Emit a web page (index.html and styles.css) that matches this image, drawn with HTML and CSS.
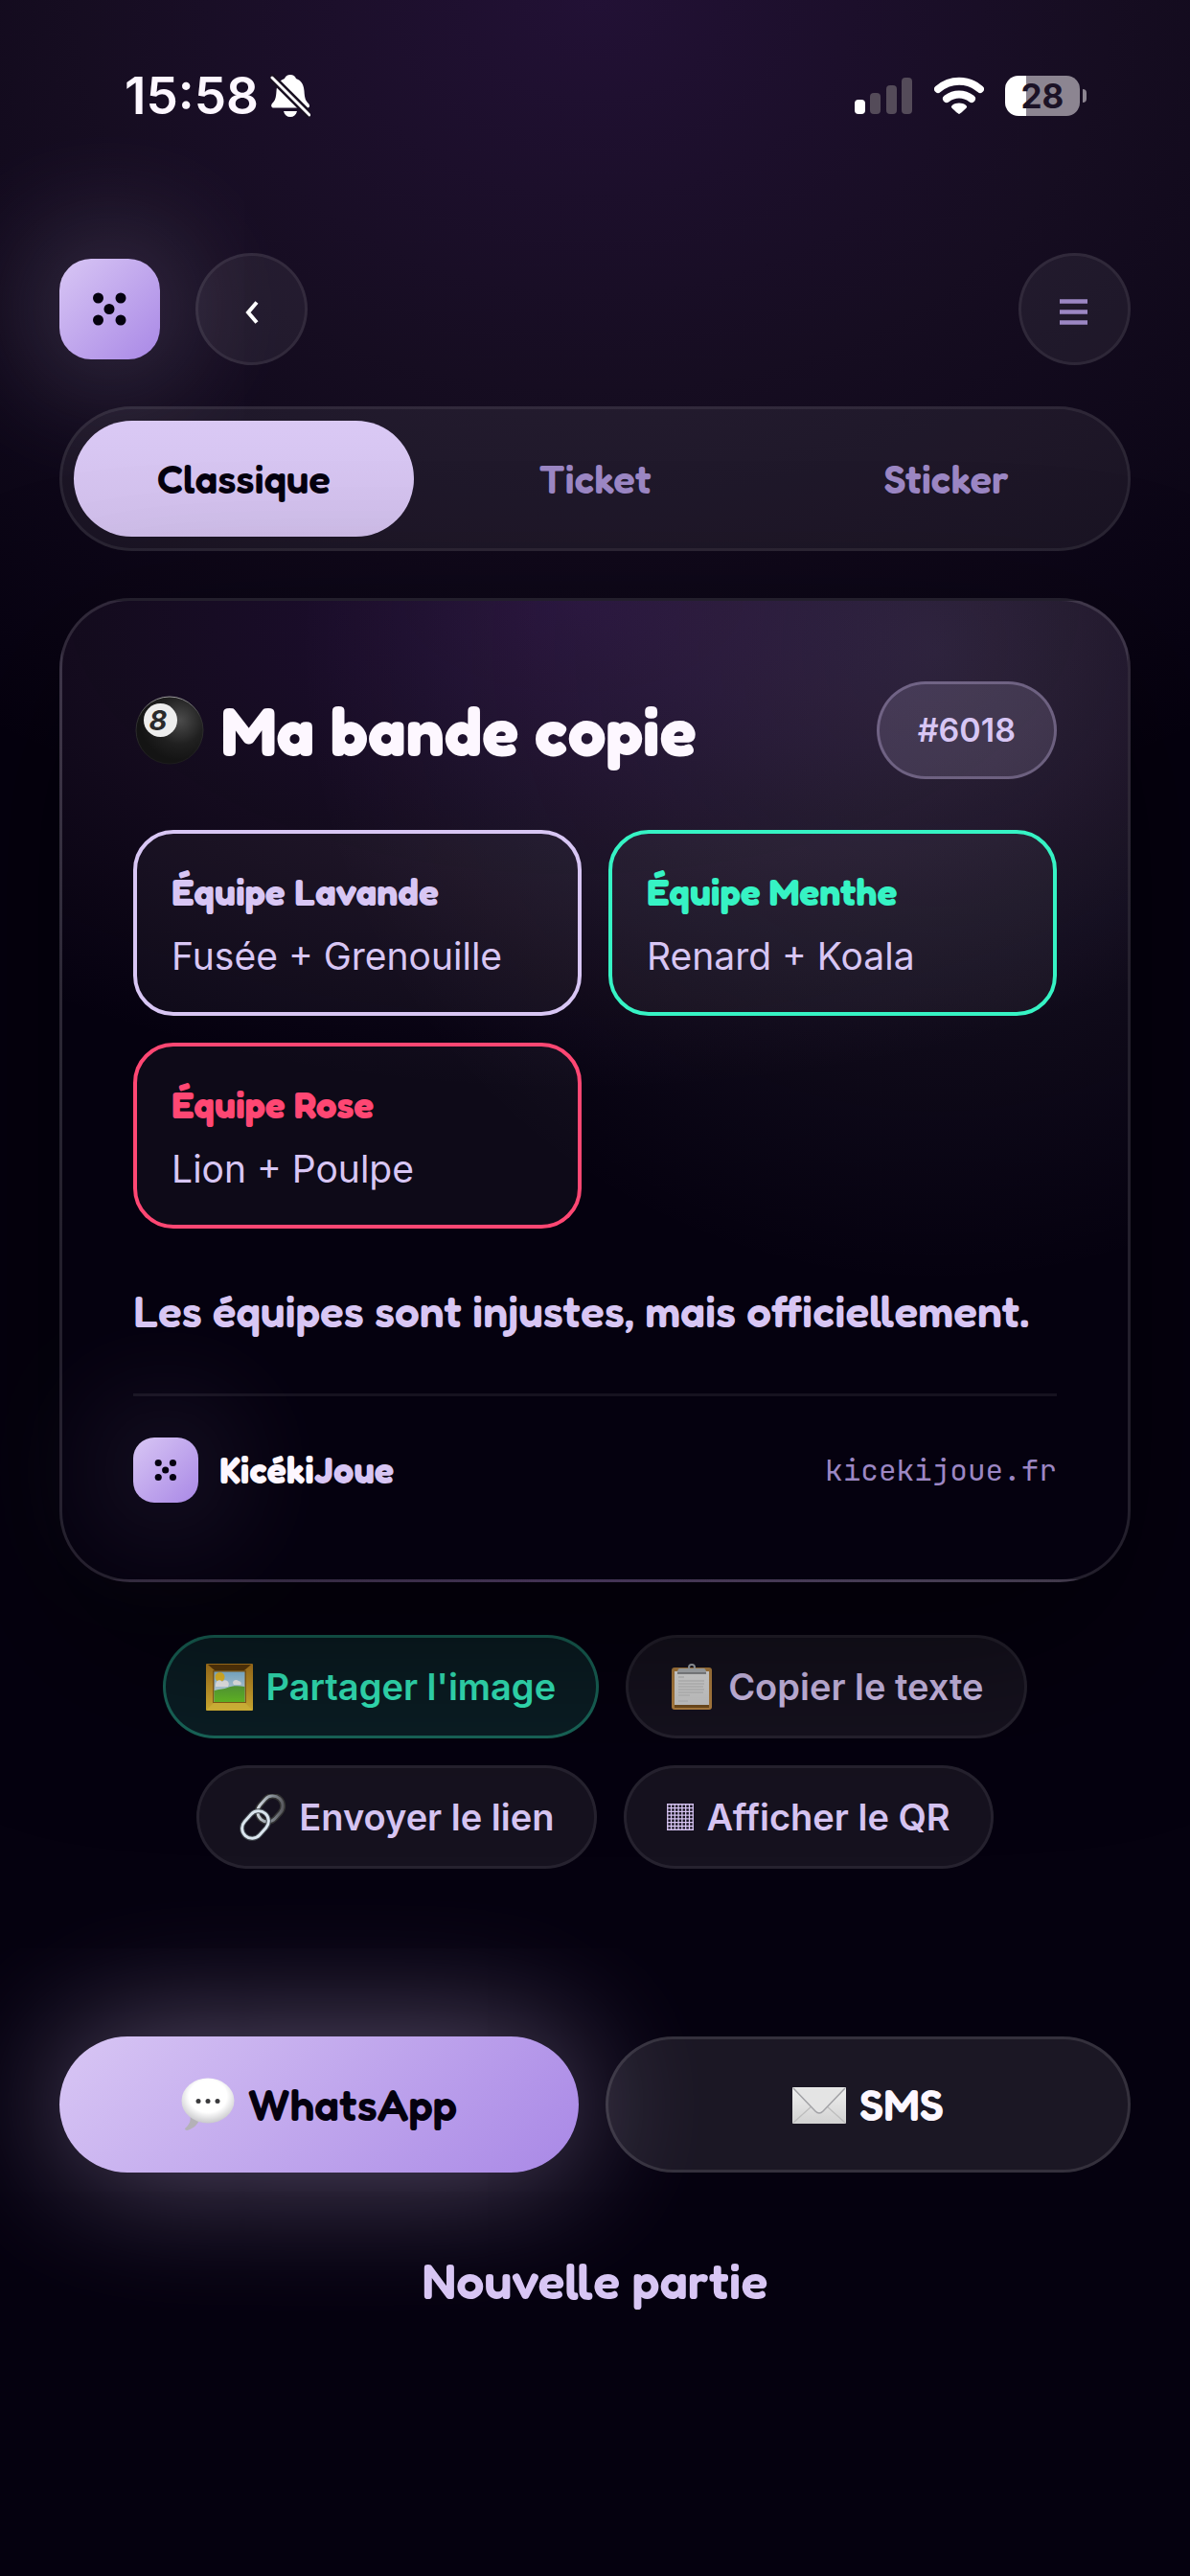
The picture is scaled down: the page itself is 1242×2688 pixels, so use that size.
FILE: index.html
```html
<!DOCTYPE html>
<html lang="fr">
<head>
<meta charset="utf-8">
<meta name="viewport" content="width=device-width, initial-scale=1">
<title>KicékiJoue – Ma bande copie</title>
<link rel="stylesheet" href="styles.css">
</head>
<body>
<svg class="defs" width="0" height="0" aria-hidden="true">
  <defs>
    <symbol id="dice" viewBox="0 0 105 105">
      <circle cx="40.500" cy="41" r="5.500"/><circle cx="64" cy="41" r="5.500"/>
      <circle cx="52" cy="52.500" r="5.500"/>
      <circle cx="40.500" cy="64" r="5.500"/><circle cx="64" cy="64" r="5.500"/>
    </symbol>
    <radialGradient id="ball" cx=".65" cy=".35" r=".6"><stop offset="0" stop-color="#4c4c4c"/><stop offset=".6" stop-color="#202020"/><stop offset="1" stop-color="#141414"/></radialGradient>
    <linearGradient id="ballRim" x1="0" y1="0" x2="0" y2="1"><stop offset="0" stop-color="#9a9a9a"/><stop offset=".3" stop-color="#333"/><stop offset="1" stop-color="#1c1c1c"/></linearGradient>
    <linearGradient id="gold" x1="0" y1="0" x2="0" y2="1"><stop offset="0" stop-color="#b9811f"/><stop offset="1" stop-color="#e2bd36"/></linearGradient>
    <linearGradient id="sky" x1="0" y1="0" x2="0" y2="1"><stop offset="0" stop-color="#8fc9ea"/><stop offset="1" stop-color="#f0f5f8"/></linearGradient>
    <linearGradient id="grass" x1="0" y1="0" x2="0" y2="1"><stop offset="0" stop-color="#5fae3c"/><stop offset="1" stop-color="#6ccb28"/></linearGradient>
    <linearGradient id="steel" x1="0" y1="0" x2="1" y2="1"><stop offset="0" stop-color="#eef4fa"/><stop offset=".5" stop-color="#8b949c"/><stop offset="1" stop-color="#4d4a4e"/></linearGradient>
    <linearGradient id="paper" x1="0" y1="0" x2="0" y2="1"><stop offset="0" stop-color="#efefef"/><stop offset="1" stop-color="#d2d2d2"/></linearGradient>
    <radialGradient id="bubble" cx=".5" cy=".4" r=".6"><stop offset=".6" stop-color="#fff"/><stop offset="1" stop-color="#c9c9cc"/></radialGradient>
  </defs>
</svg>

<div class="status">
  <div class="status-left">
    <span class="clock">15:58</span>
    <svg class="bell" viewBox="0 0 42 46" aria-label="Silencieux">
      <path fill="#fff" d="M21 1c3 0 5 1.500 6 4 6 2 8 7 8.500 13 .5 8 1.500 10 4.500 13 1.500 2 1.500 4.500-1 4.500H3.500C1 35.500.5 33 2 31c3.500-3.500 4-6 4.500-13C7 12 9 7 15 5c1-2.500 3-4 6-4zM14 39h14c-1 4-3.500 6-7 6s-6-2-7-6z"/>
      <path stroke="#191021" stroke-width="8" stroke-linecap="round" d="M2 4l39 39"/>
      <path stroke="#fff" stroke-width="3" stroke-linecap="round" d="M2 4l39 39"/>
    </svg>
  </div>
  <div class="status-right">
    <svg class="signal" viewBox="0 0 61 40" aria-label="Réseau">
      <rect x="0" y="24" width="11" height="15" rx="4" fill="#fff"/>
      <g fill="#544b59"><rect x="16" y="17" width="11" height="22" rx="4"/><rect x="33" y="9" width="11" height="30" rx="4"/><rect x="49" y="1" width="11" height="38" rx="4"/></g>
    </svg>
    <svg class="wifi" viewBox="0 0 52 40" aria-label="Wi-Fi">
      <g fill="none" stroke="#fff" stroke-width="8" stroke-linecap="round"><path d="M4 13C17 2 35 2 48 13"/><path d="M13 23c8-6 18-6 26 0"/></g>
      <path fill="#fff" d="M26 39c1 0 7-5.500 8-7 .8-1.500-2.500-4.500-8-4.500S17.200 30.500 18 32c1 1.500 7 7 8 7z"/>
    </svg>
    <div class="battery"><span class="level">28</span></div>
  </div>
</div>

<main class="page">
  <header class="topbar">
    <a class="logo" href="#" aria-label="Accueil"><svg><use href="#dice"/></svg></a>
    <button class="round" type="button" aria-label="Retour"><svg viewBox="0 0 16 24"><path d="M13 1.500L4 12l9 10.500" fill="none" stroke="#fff" stroke-width="4"/></svg></button>
    <button class="round menu" type="button" aria-label="Menu"><svg viewBox="0 0 30 28"><path d="M0 2.500h29M0 13.500h29M0 24.500h29" stroke="#9c87c4" stroke-width="4.500"/></svg></button>
  </header>

  <nav class="tabs" aria-label="Style">
    <button class="tab active" type="button">Classique</button>
    <button class="tab" type="button">Ticket</button>
    <button class="tab" type="button">Sticker</button>
  </nav>

  <article class="card">
    <div class="card-head">
      <svg class="ball" viewBox="0 0 72 72" aria-hidden="true">
        <circle cx="36" cy="36" r="35" fill="url(#ball)" stroke="url(#ballRim)" stroke-width="1"/>
        <circle cx="26.500" cy="25.500" r="17.500" fill="#ededed"/>
        <text x="24" y="36" text-anchor="middle" class="ball-number">8</text>
      </svg>
      <h1>Ma bande copie</h1>
      <span class="badge">#6018</span>
    </div>
    <div class="teams">
      <section class="team lavande"><h2>Équipe Lavande</h2><p>Fusée + Grenouille</p></section>
      <section class="team menthe"><h2>Équipe Menthe</h2><p>Renard + Koala</p></section>
      <section class="team rose"><h2>Équipe Rose</h2><p>Lion + Poulpe</p></section>
    </div>
    <p class="quote">Les équipes sont injustes, mais officiellement.</p>
    <footer class="card-foot">
      <span class="logo small"><svg><use href="#dice"/></svg></span>
      <span class="brand">Kicéki<span>Joue</span></span>
      <span class="url">kicekijoue.fr</span>
    </footer>
  </article>

  <div class="chips">
    <button class="chip share" type="button">
      <svg class="emoji" viewBox="0 0 49 49"><rect width="49" height="49" rx="1" fill="url(#gold)"/><path d="M2 1h45l-7 6H9z" fill="#5d3b0b"/><rect x="7" y="7" width="35" height="34" fill="#92651a"/><rect x="8.500" y="8.500" width="32" height="31.500" fill="url(#sky)"/><circle cx="14.500" cy="14" r="5" fill="#f4c72c"/><path d="M10 22c0-5 5-6 7-3 3-4 9 0 6 5H10zM28 20c0-3 4-4 6-2 2 0 4 3 2 4h-7z" fill="#fff"/><path d="M8.500 28c7-2 10-1 14-3s12-2 18-1v16h-32z" fill="url(#grass)"/><path d="M1 48l7-7h33l7 7z" fill="#e6c53d"/></svg>
      Partager l'image</button>
    <button class="chip" type="button">
      <svg class="emoji" viewBox="0 0 49 49"><rect x="3" y="4" width="42" height="44" rx="3" fill="#b78443"/><path d="M6 42h36v4H6z" fill="#77501f"/><rect x="6" y="8" width="36" height="35" fill="url(#paper)"/><circle cx="24" cy="4" r="3" fill="none" stroke="#a9afb5" stroke-width="2"/><path d="M12 5h24c2 0 3 1 3 5H9c0-4 1-5 3-5z" fill="#b9bdc1"/><path d="M9 10h30" stroke="#77787b" stroke-width="1.500"/><path d="M10 14h6M10 18h27M10 21h27M10 24h26M10 27h27M10 30h26M10 33h12M10 39h10" stroke="#c0c0c0" stroke-width="1.200"/></svg>
      Copier le texte</button>
    <button class="chip" type="button">
      <svg class="emoji" viewBox="0 0 49 49"><g fill="none"><rect x="17.500" y="5" width="29" height="21" rx="10.500" transform="rotate(-48 32 15.500)" stroke="#333" stroke-width="6"/><rect x="17.500" y="5" width="29" height="21" rx="10.500" transform="rotate(-48 32 15.500)" stroke="url(#steel)" stroke-width="3"/><rect x="1" y="21.500" width="31" height="21" rx="10.500" transform="rotate(-48 16.500 32)" stroke="#444a50" stroke-width="5"/><rect x="1" y="21.500" width="31" height="21" rx="10.500" transform="rotate(-48 16.500 32)" stroke="#dce7f0" stroke-width="3"/></g></svg>
      Envoyer le lien</button>
    <button class="chip" type="button">
      <svg class="grid" viewBox="0 0 28 28"><path d="M.75 0v28M4.530 0v28M8.320 0v28M12.100 0v28M15.900 0v28M19.700 0v28M23.500 0v28M27.250 0v28M0 .75h28M0 4.530h28M0 8.320h28M0 12.100h28M0 15.900h28M0 19.700h28M0 23.500h28M0 27.250h28" stroke="#d8c6f4" stroke-width="1.300"/></svg>
      Afficher le QR</button>
  </div>

  <div class="actions">
    <button class="action primary" type="button">
      <svg class="emoji" viewBox="0 0 56 56"><path d="M9 37c2 7 0 12-5 16 0 2 2 2.500 4 1.500C14 52 17 49 19 44z" fill="#b4b1b8"/><ellipse cx="28" cy="24" rx="27.500" ry="23.500" fill="url(#bubble)"/><g fill="#3a3a3c"><circle cx="18" cy="24.500" r="2.500"/><circle cx="28" cy="24.500" r="2.500"/><circle cx="38" cy="24.500" r="2.500"/></g></svg>
      WhatsApp</button>
    <button class="action secondary" type="button">
      <svg class="emoji" viewBox="0 0 56 56"><rect y="10" width="56" height="38" rx="1" fill="url(#paper)"/><path d="M1 47l20-18M55 47L35 29" stroke="#bdbdbd" stroke-width="1.200"/><path d="M1 11l23 24c2.500 2.500 5.500 2.500 8 0l23-24" fill="#e4e4e4" stroke="#a2a2a6" stroke-width="1.500"/></svg>
      SMS</button>
  </div>
  <a class="restart" href="#">Nouvelle partie</a>
</main>
</body>
</html>
```
FILE: styles.css
```css
:root {
  --base: #05010f;
  --lavender: #d8c6f4;
  --violet: #a988e6;
  --muted: #9c87c4;
  --ink: #fdf7ff;
  --mint: #36f3c4;
  --rose: #ff4773;
  --display: Fredoka, Lato, "Open Sans", sans-serif;
  --text: Inter, "Noto Sans", sans-serif;
}

* {
  box-sizing: border-box;
}

body {
  margin: 0;
  min-height: 100vh;
  overflow-x: hidden;
  background:
    radial-gradient(96% 900px at 50% 0, rgba(150, 80, 205, 0.2), rgba(160, 110, 180, 0.11) 45%, transparent) no-repeat,
    var(--base);
  color: var(--ink);
  font-family: var(--text);
}

h1,
h2,
p {
  margin: 0;
}

button {
  margin: 0;
  padding: 0;
  border: 0;
  background: none;
  color: inherit;
  font: inherit;
}

a {
  color: inherit;
  text-decoration: none;
}

svg {
  display: block;
  flex: none;
}

.defs {
  position: absolute;
}

/* Status bar */
.status {
  display: flex;
  justify-content: space-between;
  align-items: center;
  padding: 68px 108px 68px 130px;
  height: 200px;
}

.status-left,
.status-right {
  display: flex;
  align-items: center;
}

.status-left {
  gap: 12px;
}

.status-right {
  gap: 22px;
}

.clock {
  font-size: 53px;
  line-height: 64px;
  font-weight: 600;
}

.bell {
  width: 42px;
  height: 46px;
}

.signal {
  width: 61px;
  height: 40px;
}

.wifi {
  width: 52px;
  height: 40px;
}

.battery {
  display: flex;
  align-items: center;
  gap: 3px;
}

.battery::after {
  content: "";
  width: 4px;
  height: 14px;
  border-radius: 0 8px 8px 0;
  background: #8c8591;
}

.level {
  width: 78px;
  border-radius: 14px;
  background: linear-gradient(90deg, #fff 28%, #8c8591 28%);
  color: #1b1226;
  font-size: 35px;
  line-height: 42px;
  font-weight: 700;
  text-align: center;
}

/* Page */
.page {
  padding: 64px 5% 200px;
}

.topbar {
  display: flex;
  align-items: center;
  gap: 37px;
}

.logo {
  width: 105px;
  height: 105px;
  border-radius: 33px;
  background: linear-gradient(135deg, var(--lavender), var(--violet));
  box-shadow: 0 0 144px rgba(216, 198, 244, 0.45);
}

.logo svg {
  width: 100%;
  height: 100%;
  fill: var(--base);
}

.logo.small {
  width: 68px;
  height: 68px;
  border-radius: 22px;
}

.round {
  display: grid;
  place-items: center;
  width: 117px;
  height: 117px;
  padding-top: 6px;
  border: 3px solid rgba(255, 255, 255, 0.07);
  border-radius: 50%;
  background: rgba(255, 255, 255, 0.06);
}

.round svg {
  width: 16px;
  height: 24px;
}

.round.menu {
  margin-left: auto;
}

.menu svg {
  width: 30px;
  height: 28px;
}

.tabs {
  display: flex;
  gap: 12px;
  margin-top: 43px;
  padding: 12px;
  border: 3px solid rgba(255, 255, 255, 0.07);
  border-radius: 76px;
  background: rgba(255, 255, 255, 0.06);
}

.tab {
  flex: 1;
  height: 121px;
  border-radius: 61px;
  color: var(--muted);
  font: 600 42px/48px var(--display);
}

.tab.active {
  background: linear-gradient(#dac9f5, #d0beea);
  color: var(--base);
}

/* Shared result card */
.card {
  position: relative;
  z-index: 1;
  margin-top: 49px;
  padding: 84px 74px 80px;
  border: 3px solid rgba(255, 255, 255, 0.12);
  border-radius: 74px;
  background:
    radial-gradient(60% 65% at 82% 5%, rgba(216, 198, 244, 0.12), transparent),
    radial-gradient(85% 50% at 48% 0, rgba(145, 65, 205, 0.2), rgba(150, 100, 160, 0.1) 55%, transparent),
    var(--base);
  box-shadow: 0 72px 180px rgba(0, 0, 0, 0.5);
}

.card-head {
  display: flex;
  align-items: center;
}

.ball {
  width: 72px;
  height: 72px;
  margin: 0 18px 0 2px;
}

.ball-number {
  font: italic 700 29px var(--text);
  fill: #2a2a2a;
}

h1 {
  font: 700 71px/84px var(--display);
}

.badge {
  margin-left: auto;
  padding: 28px 40px;
  border: 3px solid rgba(216, 198, 244, 0.3);
  border-radius: 51px;
  background: rgba(216, 198, 244, 0.15);
  color: var(--lavender);
  font-size: 34px;
  line-height: 40px;
  font-weight: 600;
}

.teams {
  display: grid;
  grid-template-columns: 1fr 1fr;
  gap: 28px;
  margin-top: 53px;
}

.team {
  padding: 37px 36px 32px;
  border: 4px solid currentColor;
  border-radius: 42px;
  background: rgba(255, 255, 255, 0.04);
}

.team h2 {
  font: 700 39px/48px var(--display);
}

.team p {
  margin-top: 17px;
  color: var(--lavender);
  font-size: 39px;
  line-height: 52px;
}

.team.lavande {
  color: var(--lavender);
}

.team.menthe {
  color: var(--mint);
}

.team.rose {
  color: var(--rose);
}

.quote {
  margin-top: 58px;
  color: var(--lavender);
  font: 600 46px/56px var(--display);
}

.card-foot {
  display: flex;
  align-items: center;
  margin-top: 58px;
  padding-top: 43px;
  border-top: 3px solid rgba(255, 255, 255, 0.07);
}

.brand {
  margin-left: 22px;
  font: 700 38px/48px var(--display);
}

.brand span {
  color: var(--lavender);
}

.url {
  margin-left: auto;
  color: var(--muted);
  font: 31px/40px "JetBrains Mono", "DejaVu Sans Mono", monospace;
}

/* Share options */
.chips {
  display: flex;
  flex-wrap: wrap;
  justify-content: center;
  gap: 28px;
  margin: 55px 90px 0;
}

.chip {
  display: flex;
  align-items: center;
  gap: 13px;
  height: 108px;
  padding: 0 42px;
  border: 3px solid rgba(255, 255, 255, 0.07);
  border-radius: 54px;
  background: rgba(255, 255, 255, 0.07);
  color: var(--lavender);
  font-size: 38px;
  line-height: 48px;
  font-weight: 600;
  white-space: nowrap;
}

.chip .emoji {
  width: 49px;
  height: 49px;
}

.grid {
  width: 28px;
  height: 28px;
}

.chip.share {
  border-color: rgba(54, 243, 196, 0.35);
  background: rgba(54, 243, 196, 0.12);
  color: var(--mint);
}

/* Main actions */
.actions {
  display: flex;
  gap: 28px;
  margin-top: 175px;
}

.action {
  flex: 1;
  display: flex;
  justify-content: center;
  align-items: center;
  gap: 14px;
  height: 142px;
  border-radius: 71px;
  font: 600 46px/56px var(--display);
}

.action .emoji {
  width: 56px;
  height: 56px;
}

.primary {
  background: linear-gradient(135deg, var(--lavender), var(--violet));
  box-shadow: 0 0 144px rgba(216, 198, 244, 0.45);
  color: var(--base);
}

.secondary {
  border: 3px solid rgba(255, 255, 255, 0.11);
  background: rgba(255, 255, 255, 0.09);
}

.restart {
  display: block;
  width: fit-content;
  margin: 83px auto 0;
  color: var(--lavender);
  font: 600 52px/60px var(--display);
}
```
